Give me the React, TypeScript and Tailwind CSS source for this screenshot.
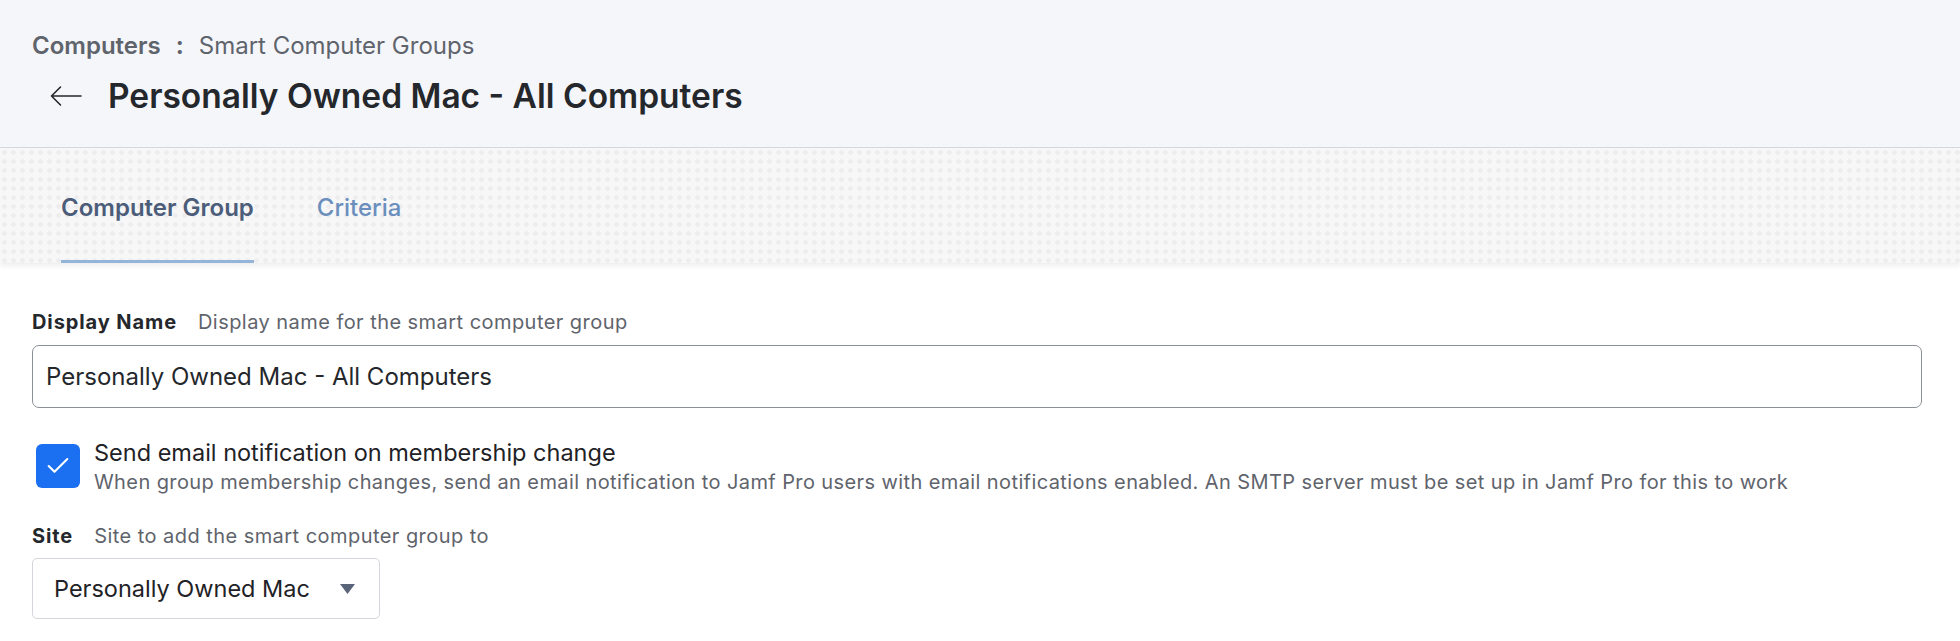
import { Check } from 'lucide-react';

export default function App() {
  return (
    <div className="min-h-[641px] bg-white font-['Inter',sans-serif] text-[#24272b]">
      <header className="h-[148px] border-b border-[#d6d8dd] bg-[#f5f6fa] pl-[32px]">
        <div className="flex items-center pt-[32px] text-[24px] leading-[28px] text-[#5f646c]">
          <span className="font-semibold">Computers</span>
          <span className="mx-[15px] font-bold">:</span>
          <span>Smart Computer Groups</span>
        </div>
        <div className="mt-[14px] flex items-center">
          <svg className="ml-[18px] h-[22px] w-[32px]" viewBox="0 0 32 22" fill="none" stroke="#24272b" strokeWidth="1.6" strokeLinecap="round" strokeLinejoin="round">
            <path d="M31 11 H1.5 M10.5 2 L1.5 11 L10.5 20" />
          </svg>
          <h1 className="ml-[26px] text-[33.5px] font-semibold leading-[44px] text-[#24272b]">
            Personally Owned Mac - All Computers
          </h1>
        </div>
      </header>

      <nav className="relative flex h-[115px] items-end gap-[63px] bg-[#f7f7f8] bg-[radial-gradient(circle,#ededef_2px,transparent_2.6px)] bg-[size:9px_9px] pl-[61px] shadow-[0_3px_5px_rgba(0,0,0,0.07)]">
        <button
          type="button"
          className="border-b-[3px] border-[#94b4d8] pb-[38px] text-[24px] font-semibold leading-[28px] text-[#4c5d7a]"
        >
          Computer Group
        </button>
        <button
          type="button"
          className="border-b-[3px] border-transparent pb-[38px] text-[24px] font-medium leading-[28px] text-[#6b8fbd]"
        >
          Criteria
        </button>
      </nav>

      <main className="px-[32px] pt-[47px]">
        <div className="flex items-baseline text-[20px] leading-[24px]">
          <span className="font-bold tracking-[0.9px] text-[#24272b]">Display Name</span>
          <span className="ml-[21px] tracking-[0.45px] text-[#5f646c]">Display name for the smart computer group</span>
        </div>
        <div className="mt-[11px] flex h-[63px] w-[1890px] items-center rounded-[7px] border border-[#8b9096] px-[13px] text-[24px] text-[#24272b]">
          Personally Owned Mac - All Computers
        </div>

        <div className="mt-[36px] flex items-start">
          <span className="ml-[4px] flex h-[44px] w-[44px] items-center justify-center rounded-[6px] bg-[#1b6ff1]">
            <Check className="h-[28px] w-[28px] text-white" strokeWidth={1.8} />
          </span>
          <div className="ml-[14px] -mt-[6px]">
            <p className="text-[23.5px] leading-[30px] text-[#1f2226]">
              Send email notification on membership change
            </p>
            <p className="text-[20px] leading-[29px] tracking-[0.4px] text-[#5f646c]">
              When group membership changes, send an email notification to Jamf Pro users with email notifications enabled. An SMTP server must be set up in Jamf Pro for this to work
            </p>
          </div>
        </div>

        <div className="mt-[27px] flex items-baseline text-[20px] leading-[24px]">
          <span className="font-bold tracking-[0.9px] text-[#24272b]">Site</span>
          <span className="ml-[21px] tracking-[0.45px] text-[#5f646c]">Site to add the smart computer group to</span>
        </div>
        <div className="mt-[10px] flex h-[61px] w-[348px] items-center rounded-[5px] border border-[#d3d6db] pl-[21px] text-[23.5px] text-[#1f2226]">
          <span>Personally Owned Mac</span>
          <svg className="ml-auto mr-[24px] h-[10px] w-[15px]" viewBox="0 0 15 10">
            <path d="M0 0 H15 L7.5 10 Z" fill="#5a6478" />
          </svg>
        </div>
      </main>
    </div>
  );
}
